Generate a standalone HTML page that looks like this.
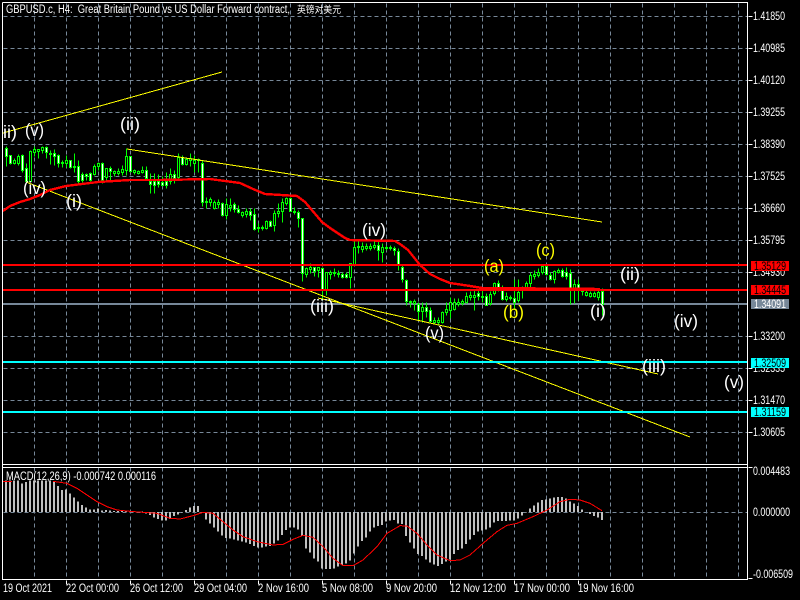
<!DOCTYPE html>
<html><head><meta charset="utf-8"><title>GBPUSD chart</title>
<style>html,body{margin:0;padding:0;background:#000;overflow:hidden}svg{display:block}
text{font-family:"Liberation Sans","WenQuanYi Zen Hei","Noto Sans CJK SC",sans-serif;fill:#fff;font-size:11.5px}
.w{font-size:17.5px}.y{fill:#ffff00}.k{fill:#000}</style></head><body>
<svg width="800" height="600" viewBox="0 0 800 600" xmlns="http://www.w3.org/2000/svg">
<rect width="800" height="600" fill="#000"/>
<g shape-rendering="crispEdges" fill="none">
<!-- grid -->
<path stroke="#778899" stroke-dasharray="4 3" transform="translate(.5,.5)" d="M34 3V464M66 3V464M98 3V464M130 3V464M162 3V464M194 3V464M226 3V464M258 3V464M290 3V464M322 3V464M354 3V464M386 3V464M418 3V464M450 3V464M482 3V464M514 3V464M546 3V464M578 3V464M610 3V464M642 3V464M674 3V464M706 3V464M738 3V464
M3 16H747M3 48H747M3 80H747M3 112H747M3 144H747M3 176H747M3 208H747M3 240H747M3 272H747M3 304H747M3 336H747M3 368H747M3 400H747M3 432H747
M34 467V579M66 467V579M98 467V579M130 467V579M162 467V579M194 467V579M226 467V579M258 467V579M290 467V579M322 467V579M354 467V579M386 467V579M418 467V579M450 467V579M482 467V579M514 467V579M546 467V579M578 467V579M610 467V579M642 467V579M674 467V579M706 467V579M738 467V579M3 512H747"/>
<!-- gray price line -->
<path stroke="#778899" stroke-width="2" d="M3 304H747"/>
<!-- candle wicks -->
<g transform="translate(.5,.5)">
<path stroke="#00ff00" d="M6 146V166M10 155V164M14 158V164M18 154V165M22 154V172M26 163V182M30 150V182M34 146V156M38 149V158M42 146V153M46 146V158M50 150V164M54 149V165M58 154V167M62 160V167M66 155V167M70 160V168M74 153V172M78 160V183M82 172V182M86 173V180M90 172V181M94 164V175M98 162V170M102 162V183M106 168V182M110 166V180M114 170V176M118 168V175M122 165V175M126 148V175M130 156V172M134 169V174M138 170V174M142 166V173M146 166V180M150 173V193M154 173V193M158 174V187M162 176V186M166 172V188M170 168V184M174 170V183M178 153V178M182 155V165M186 157V165M190 153V166M194 155V172M198 158V172M202 160V206M206 197V208M210 197V206M214 200V209M218 199V208M222 202V216M226 198V219M230 198V211M234 202V212M238 205V213M242 211V217M246 208V217M250 208V220M254 208V230M258 223V232M262 225V230M266 220V229M270 220V226M274 210V231M278 203V217M282 198V222M286 197V205M290 197V211M294 207V214M298 210V227M302 218V281M306 267V277M310 263V273M314 267V276M318 267V277M322 267V300M326 272V295M330 270V279M334 268V276M338 270V277M342 272V278M346 272V278M350 263V288M354 241V265M358 240V253M362 242V252M366 243V250M370 243V250M374 240V249M378 240V260M382 243V262M386 245V250M390 245V250M394 246V255M398 248V270M402 265V282M406 279V305M410 300V307M414 299V310M418 302V320M422 302V322M426 302V317M430 307V322M434 317V324M438 317V325M442 311V323M446 302V315M450 297V318M454 298V310M458 298V306M462 299V305M466 292V303M470 291V300M474 290V310M478 289V300M482 289V302M486 293V305M490 291V305M494 282V295M498 280V291M502 285V300M506 292V301M510 295V300M514 279V308M518 279V302M522 286V298M526 281V290M530 272V287M534 270V279M538 268V277M542 266V274M546 266V275M550 272V280M554 270V283M558 268V273M562 268V277M566 267V279M570 269V304M574 279V303M578 279V300M582 288V295M586 290V296M590 291V297M594 291V297M598 290V300M602 288V315"/>
<!-- bullish (hollow) bodies -->
<path stroke="#00ff00" fill="#000" d="M13 160h2v3h-2zM17 156h2v7h-2zM29 151h2v30h-2zM33 149h2v3h-2zM37 149h2v2h-2zM41 147h2v3h-2zM61 162h2v1h-2zM65 160h2v3h-2zM93 166h2v8h-2zM97 163h2v3h-2zM105 168h2v9h-2zM113 171h2v2h-2zM117 171h2v2h-2zM121 169h2v3h-2zM125 156h2v14h-2zM133 170h2v2h-2zM137 171h2v2h-2zM141 170h2v2h-2zM169 174h2v7h-2zM177 157h2v20h-2zM185 159h2v5h-2zM189 158h2v2h-2zM193 160h2v3h-2zM205 201h2v1h-2zM209 199h2v3h-2zM213 202h2v6h-2zM217 202h2v2h-2zM225 204h2v11h-2zM229 205h2v2h-2zM241 212h2v3h-2zM245 211h2v3h-2zM257 227h2v1h-2zM261 227h2v1h-2zM265 221h2v7h-2zM273 213h2v12h-2zM277 211h2v2h-2zM281 202h2v9h-2zM285 198h2v5h-2zM293 211h2v1h-2zM305 268h2v6h-2zM309 267h2v2h-2zM317 267h2v3h-2zM325 272h2v18h-2zM329 272h2v2h-2zM333 272h2v1h-2zM337 273h2v1h-2zM349 263h2v14h-2zM353 247h2v17h-2zM357 246h2v1h-2zM361 246h2v3h-2zM365 246h2v2h-2zM369 246h2v2h-2zM373 245h2v2h-2zM381 247h2v5h-2zM385 247h2v1h-2zM389 247h2v1h-2zM409 301h2v1h-2zM413 301h2v2h-2zM421 307h2v4h-2zM433 320h2v2h-2zM437 320h2v2h-2zM441 312h2v10h-2zM445 309h2v3h-2zM449 302h2v8h-2zM453 302h2v7h-2zM457 302h2v2h-2zM461 301h2v2h-2zM465 296h2v6h-2zM469 295h2v2h-2zM473 295h2v2h-2zM481 296h2v1h-2zM489 294h2v9h-2zM493 283h2v10h-2zM505 296h2v3h-2zM509 297h2v1h-2zM517 292h2v8h-2zM521 287h2v1h-2zM525 283h2v4h-2zM529 275h2v8h-2zM533 274h2v2h-2zM537 272h2v3h-2zM541 266h2v6h-2zM553 271h2v8h-2zM557 270h2v2h-2zM573 284h2v4h-2zM581 288h2v3h-2zM585 292h2v3h-2zM589 293h2v3h-2zM593 293h2v3h-2zM597 292h2v5h-2z"/>
<!-- bearish (filled) bodies -->
<path stroke="#00ff00" fill="#fff" d="M5 148h2v8h-2zM9 155h2v8h-2zM21 155h2v15h-2zM25 168h2v13h-2zM45 147h2v5h-2zM49 153h2v1h-2zM53 153h2v3h-2zM57 155h2v8h-2zM69 160h2v7h-2zM73 166h2v1h-2zM77 166h2v15h-2zM81 174h2v6h-2zM85 174h2v2h-2zM89 173h2v7h-2zM101 163h2v17h-2zM109 168h2v3h-2zM129 156h2v15h-2zM145 170h2v8h-2zM149 181h2v3h-2zM153 181h2v4h-2zM157 181h2v3h-2zM161 182h2v3h-2zM165 181h2v4h-2zM173 174h2v4h-2zM181 157h2v7h-2zM197 159h2v1h-2zM201 163h2v39h-2zM221 203h2v12h-2zM233 204h2v5h-2zM237 209h2v3h-2zM249 211h2v4h-2zM253 214h2v15h-2zM269 221h2v5h-2zM289 198h2v13h-2zM297 212h2v6h-2zM301 218h2v55h-2zM313 267h2v4h-2zM321 268h2v22h-2zM341 274h2v3h-2zM345 274h2v3h-2zM377 245h2v5h-2zM393 248h2v2h-2zM397 251h2v13h-2zM401 267h2v12h-2zM405 280h2v21h-2zM417 304h2v7h-2zM425 307h2v4h-2zM429 310h2v11h-2zM477 293h2v3h-2zM485 296h2v9h-2zM497 283h2v5h-2zM501 289h2v10h-2zM513 298h2v4h-2zM545 266h2v8h-2zM549 275h2v4h-2zM561 270h2v6h-2zM565 272h2v4h-2zM569 273h2v15h-2zM577 284h2v4h-2zM601 291h2v13h-2z"/>
</g>
<!-- yellow trendlines -->
<path stroke="#ffff00" stroke-width="1" d="M3 133L222 72M127 149L602 222M26 182L690 437M318 298L658 374"/>
<!-- horizontal levels -->
<path stroke="#ff0000" stroke-width="2" d="M3 265H747M3 290H747"/>
<path stroke="#00ffff" stroke-width="2" d="M3 362H747M3 412H747"/>
<!-- MA -->
<path stroke="#ff0000" stroke-width="2.4" d="M3 211L10 206L20 202L30 199L40 195L50 190L66 186L98 182L130 180L160 180L210 179L225 181L240 183L253 189L265 194L297 196L305 202L322 222L330 228L345 238L350 240L395 241L400 244L408 250L420 265L430 274L440 279L450 283L470 286L482 288L600 289"/>
<!-- MACD histogram -->
<g transform="translate(0,450) scale(1,.33333)">
<path stroke="#c0c0c0" stroke-width="2" d="M6 186V92M10 186V92M14 186V92M18 186V92M22 186V100M26 186V96M30 186V92M34 186V92M38 186V92M42 186V92M46 186V92M50 186V92M54 186V96M58 186V108M62 186V120M66 186V118M70 186V130M74 186V142M78 186V155M82 186V165M86 186V172M90 186V178M94 186V178M98 186V175M102 186V182M106 186V180M110 186V182M114 186V183M118 186V183M122 186V181M126 186V181M130 186V183M134 186V184M138 186V184M142 186V185M146 186V190M150 186V195M154 186V202M158 186V207M162 186V212M166 186V212M170 186V207M174 186V198M178 186V194M182 186V187M186 186V180M190 186V172M194 186V168M198 186V168M202 186V187M206 186V208M210 186V220M214 186V232M218 186V245M222 186V257M226 186V264M230 186V265M234 186V268M238 186V272M242 186V275M246 186V278M250 186V282M254 186V288M258 186V292M262 186V293M266 186V290M270 186V288M274 186V280M278 186V272M282 186V255M286 186V240M290 186V233M294 186V232M298 186V238M302 186V258M306 186V295M310 186V308M314 186V325M318 186V335M322 186V355M326 186V357M330 186V357M334 186V355M338 186V350M342 186V345M346 186V340M350 186V332M354 186V310M358 186V290M362 186V273M366 186V262M370 186V245M374 186V232M378 186V228M382 186V225M386 186V215M390 186V212M394 186V210M398 186V220M402 186V222M406 186V258M410 186V278M414 186V295M418 186V312M422 186V318M426 186V328M430 186V338M434 186V343M438 186V348M442 186V342M446 186V335M450 186V328M454 186V312M458 186V300M462 186V295M466 186V282M470 186V268M474 186V255M478 186V245M482 186V242M486 186V238M490 186V232M494 186V218M498 186V213M502 186V213M506 186V213M510 186V212M514 186V212M518 186V205M522 186V197M526 186V188M530 186V176M534 186V167M538 186V157M542 186V150M546 186V148M550 186V145M554 186V143M558 186V141M562 186V141M566 186V145M570 186V155M574 186V160M578 186V168M582 186V178M586 186V186M590 186V192M594 186V198M598 186V203M602 186V210"/>
<path stroke="#ff0000" stroke-width="1" vector-effect="non-scaling-stroke" d="M3 94L12 94M53 94L67 100L77 115L87 135L97 155L107 170L117 180L130 184L143 187L157 190L170 205L180 207L193 197L203 187L213 190L223 215L233 240L243 260L257 275L273 285L283 283L293 268L303 256L313 262L323 290L333 325L343 347L353 347L363 330L377 290L387 250L400 227L407 228L417 250L427 285L437 315L450 332L460 330L470 315L483 280L497 245L507 226L517 220L533 200L547 180L560 155L570 148L580 150L590 160L602 182"/>
</g>
<!-- frames and ticks -->
<path stroke="#fff" transform="translate(.5,.5)" d="M2 2H747V579H2V2M2 464H747M2 467H747M748 16h4M748 48h4M748 80h4M748 112h4M748 144h4M748 176h4M748 208h4M748 240h4M748 272h4M748 336h4M748 368h4M748 400h4M748 432h4M748 467h4M748 578h4M66 580v4M130 580v4M194 580v4M258 580v4M322 580v4M386 580v4M450 580v4M514 580v4M578 580v4"/>
</g>
<!-- title -->
<text x="6" y="13" textLength="284" lengthAdjust="spacingAndGlyphs" xml:space="preserve">GBPUSD.c, H4:  Great Britain Pound vs US Dollar Forward contract,</text>
<text x="297" y="13" textLength="44" lengthAdjust="spacingAndGlyphs" style="font-size:9.5px">英镑对美元</text>
<!-- price axis -->
<g>
<text x="753" y="20" textLength="32" lengthAdjust="spacingAndGlyphs">1.41850</text>
<text x="753" y="52" textLength="32" lengthAdjust="spacingAndGlyphs">1.40985</text>
<text x="753" y="84" textLength="32" lengthAdjust="spacingAndGlyphs">1.40120</text>
<text x="753" y="116" textLength="32" lengthAdjust="spacingAndGlyphs">1.39255</text>
<text x="753" y="148" textLength="32" lengthAdjust="spacingAndGlyphs">1.38390</text>
<text x="753" y="180" textLength="32" lengthAdjust="spacingAndGlyphs">1.37525</text>
<text x="753" y="212" textLength="32" lengthAdjust="spacingAndGlyphs">1.36660</text>
<text x="753" y="244" textLength="32" lengthAdjust="spacingAndGlyphs">1.35795</text>
<text x="753" y="276" textLength="32" lengthAdjust="spacingAndGlyphs">1.34930</text>
<text x="753" y="340" textLength="32" lengthAdjust="spacingAndGlyphs">1.33200</text>
<text x="753" y="372" textLength="32" lengthAdjust="spacingAndGlyphs">1.32335</text>
<text x="753" y="404" textLength="32" lengthAdjust="spacingAndGlyphs">1.31470</text>
<text x="753" y="436" textLength="32" lengthAdjust="spacingAndGlyphs">1.30605</text>
</g>
<!-- price labels -->
<g shape-rendering="crispEdges">
<rect x="751" y="261" width="38" height="10" fill="#ff0000"/>
<rect x="751" y="285" width="38" height="10" fill="#ff0000"/>
<rect x="751" y="299" width="38" height="10" fill="#778899"/>
<rect x="751" y="358" width="38" height="10" fill="#00ffff"/>
<rect x="751" y="407" width="38" height="10" fill="#00ffff"/>
</g>
<text class="k" x="754" y="270" textLength="32" lengthAdjust="spacingAndGlyphs">1.35129</text>
<text class="k" x="754" y="294" textLength="32" lengthAdjust="spacingAndGlyphs">1.34445</text>
<text x="754" y="308" textLength="32" lengthAdjust="spacingAndGlyphs">1.34091</text>
<text class="k" x="754" y="367" textLength="32" lengthAdjust="spacingAndGlyphs">1.32509</text>
<text class="k" x="754" y="416" textLength="32" lengthAdjust="spacingAndGlyphs">1.31159</text>
<!-- macd axis -->
<text x="753" y="475" textLength="37" lengthAdjust="spacingAndGlyphs">0.004483</text>
<text x="753" y="516" textLength="37" lengthAdjust="spacingAndGlyphs">0.000000</text>
<text x="753" y="578" textLength="40" lengthAdjust="spacingAndGlyphs">-0.006509</text>
<text x="6" y="480" textLength="150" lengthAdjust="spacingAndGlyphs">MACD(12,26,9) -0.000742 0.000116</text>
<!-- time axis -->
<text x="3" y="592" textLength="49" lengthAdjust="spacingAndGlyphs">19 Oct 2021</text>
<text x="66" y="592" textLength="53" lengthAdjust="spacingAndGlyphs">22 Oct 00:00</text>
<text x="130" y="592" textLength="53" lengthAdjust="spacingAndGlyphs">26 Oct 12:00</text>
<text x="194" y="592" textLength="53" lengthAdjust="spacingAndGlyphs">29 Oct 04:00</text>
<text x="258" y="592" textLength="51" lengthAdjust="spacingAndGlyphs">2 Nov 16:00</text>
<text x="322" y="592" textLength="51" lengthAdjust="spacingAndGlyphs">5 Nov 08:00</text>
<text x="386" y="592" textLength="51" lengthAdjust="spacingAndGlyphs">9 Nov 20:00</text>
<text x="450" y="592" textLength="56" lengthAdjust="spacingAndGlyphs">12 Nov 12:00</text>
<text x="514" y="592" textLength="56" lengthAdjust="spacingAndGlyphs">17 Nov 00:00</text>
<text x="578" y="592" textLength="56" lengthAdjust="spacingAndGlyphs">19 Nov 16:00</text>
<!-- wave labels -->
<text class="w" x="-3" y="138" textLength="20" lengthAdjust="spacingAndGlyphs">(ii)</text>
<rect x="0" y="120" width="2" height="30" fill="#000"/>
<rect x="2" y="120" width="1" height="30" fill="#fff"/>
<text class="w" x="25" y="136" textLength="19" lengthAdjust="spacingAndGlyphs">(v)</text>
<text class="w" x="120" y="130" textLength="20" lengthAdjust="spacingAndGlyphs">(ii)</text>
<text class="w" x="23" y="194" textLength="23" lengthAdjust="spacingAndGlyphs">(iv)</text>
<text class="w" x="66" y="207" textLength="16" lengthAdjust="spacingAndGlyphs">(i)</text>
<text class="w" x="362" y="236" textLength="24" lengthAdjust="spacingAndGlyphs">(iv)</text>
<text class="w" x="310" y="312" textLength="24" lengthAdjust="spacingAndGlyphs">(iii)</text>
<text class="w" x="425" y="339" textLength="19" lengthAdjust="spacingAndGlyphs">(v)</text>
<text class="w y" x="484" y="272" textLength="20" lengthAdjust="spacingAndGlyphs">(a)</text>
<text class="w y" x="503" y="318" textLength="21" lengthAdjust="spacingAndGlyphs">(b)</text>
<text class="w y" x="536" y="256" textLength="19" lengthAdjust="spacingAndGlyphs">(c)</text>
<text class="w" x="590" y="317" textLength="16" lengthAdjust="spacingAndGlyphs">(i)</text>
<text class="w" x="620" y="280" textLength="20" lengthAdjust="spacingAndGlyphs">(ii)</text>
<text class="w" x="674" y="327" textLength="24" lengthAdjust="spacingAndGlyphs">(iv)</text>
<text class="w" x="642" y="372" textLength="24" lengthAdjust="spacingAndGlyphs">(iii)</text>
<text class="w" x="724" y="388" textLength="20" lengthAdjust="spacingAndGlyphs">(v)</text>
</svg>
</body></html>
